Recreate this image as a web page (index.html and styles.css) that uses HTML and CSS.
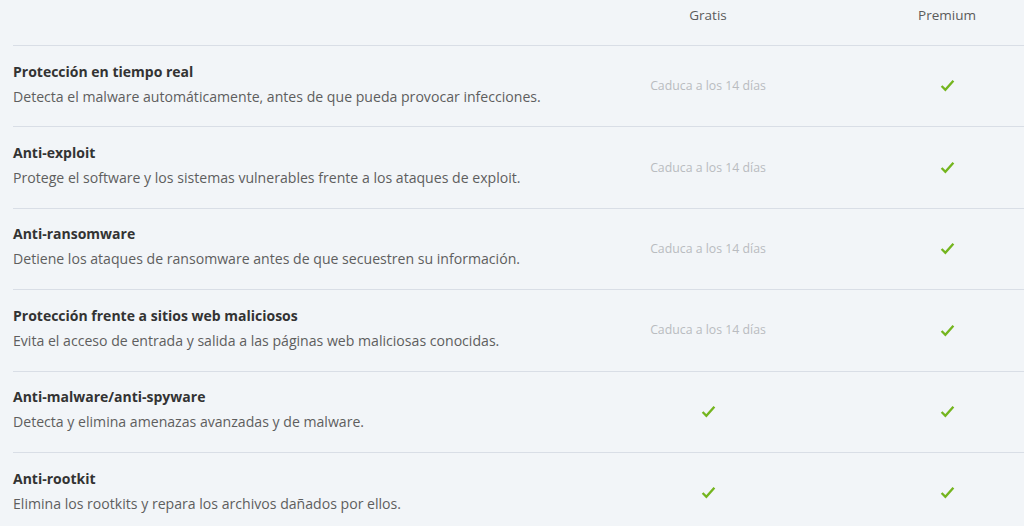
FILE: index.html
```html
<!DOCTYPE html>
<html lang="es">
<head>
    <meta charset="UTF-8">
    <meta name="viewport" content="width=device-width, initial-scale=1.0">
    <title>Comparar planes</title>
    <link rel="stylesheet" href="styles.css">
</head>
<body>
    <div class="compare">
        <div class="row head">
            <div class="feature"></div>
            <div class="plan">Gratis</div>
            <div class="plan">Premium</div>
        </div>

        <div class="row">
            <div class="feature">
                <h3>Protección en tiempo real</h3>
                <p>Detecta el malware automáticamente, antes de que pueda provocar infecciones.</p>
            </div>
            <div class="plan"><span class="trial">Caduca a los 14 días</span></div>
            <div class="plan"><svg class="check" viewBox="0 0 14 12"><path d="M1.5 6.5 L5 10 L12.5 1.5"/></svg></div>
        </div>

        <div class="row">
            <div class="feature">
                <h3>Anti-exploit</h3>
                <p>Protege el software y los sistemas vulnerables frente a los ataques de exploit.</p>
            </div>
            <div class="plan"><span class="trial">Caduca a los 14 días</span></div>
            <div class="plan"><svg class="check" viewBox="0 0 14 12"><path d="M1.5 6.5 L5 10 L12.5 1.5"/></svg></div>
        </div>

        <div class="row">
            <div class="feature">
                <h3>Anti-ransomware</h3>
                <p>Detiene los ataques de ransomware antes de que secuestren su información.</p>
            </div>
            <div class="plan"><span class="trial">Caduca a los 14 días</span></div>
            <div class="plan"><svg class="check" viewBox="0 0 14 12"><path d="M1.5 6.5 L5 10 L12.5 1.5"/></svg></div>
        </div>

        <div class="row">
            <div class="feature">
                <h3>Protección frente a sitios web maliciosos</h3>
                <p>Evita el acceso de entrada y salida a las páginas web maliciosas conocidas.</p>
            </div>
            <div class="plan"><span class="trial">Caduca a los 14 días</span></div>
            <div class="plan"><svg class="check" viewBox="0 0 14 12"><path d="M1.5 6.5 L5 10 L12.5 1.5"/></svg></div>
        </div>

        <div class="row">
            <div class="feature">
                <h3>Anti-malware/anti-spyware</h3>
                <p>Detecta y elimina amenazas avanzadas y de malware.</p>
            </div>
            <div class="plan"><svg class="check" viewBox="0 0 14 12"><path d="M1.5 6.5 L5 10 L12.5 1.5"/></svg></div>
            <div class="plan"><svg class="check" viewBox="0 0 14 12"><path d="M1.5 6.5 L5 10 L12.5 1.5"/></svg></div>
        </div>

        <div class="row">
            <div class="feature">
                <h3>Anti-rootkit</h3>
                <p>Elimina los rootkits y repara los archivos dañados por ellos.</p>
            </div>
            <div class="plan"><svg class="check" viewBox="0 0 14 12"><path d="M1.5 6.5 L5 10 L12.5 1.5"/></svg></div>
            <div class="plan"><svg class="check" viewBox="0 0 14 12"><path d="M1.5 6.5 L5 10 L12.5 1.5"/></svg></div>
        </div>
    </div>
</body>
</html>
```

FILE: styles.css
```css
html, body {
    margin: 0;
    padding: 0;
    background-color: #f2f5f8;
    overflow: hidden;
}
body {
    font-family: "Open Sans", "Noto Sans", sans-serif;
    color: #333;
}
.compare {
    margin-left: 13px;
}
.row {
    display: grid;
    grid-template-columns: 1fr 324px 154px;
    align-items: center;
    height: 81.4px;
    padding-bottom: 4px;
    box-sizing: border-box;
    border-bottom: 1px solid #d9dee6;
}
.row.head {
    height: 46px;
    padding-bottom: 0;
    align-items: start;
}
.head .plan {
    padding-top: 6px;
    font-size: 13.5px;
    color: #5b5b5b;
}
.feature h3 {
    margin: 0 0 5px 0;
    font-size: 14px;
    line-height: 20px;
    font-weight: 700;
    color: #333;
}
.feature p {
    margin: 0;
    font-size: 14.1px;
    line-height: 20px;
    color: #5e5e5e;
}
.plan {
    text-align: center;
}
.trial {
    font-size: 12.3px;
    color: #b9bcc0;
}
.check {
    width: 15px;
    height: 13px;
    display: inline-block;
    vertical-align: middle;
}
.check path {
    fill: none;
    stroke: #74b51e;
    stroke-width: 2.2;
}
```
